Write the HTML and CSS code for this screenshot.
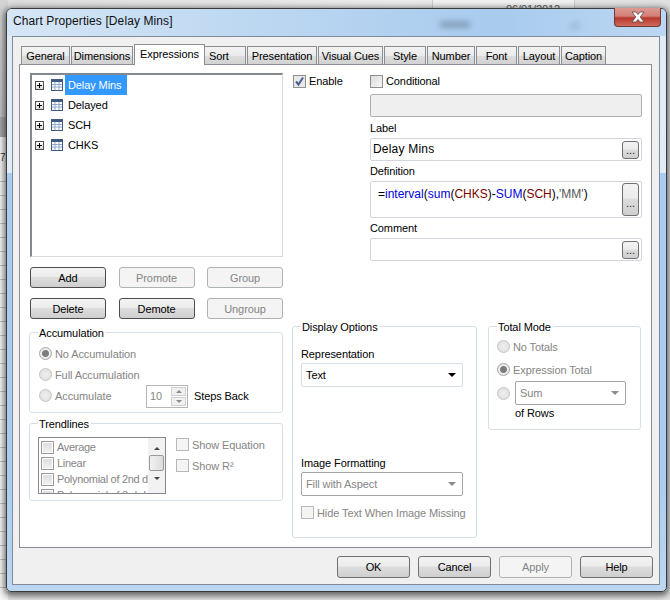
FILE: index.html
```html
<!DOCTYPE html>
<html lang="en">
<head>
<meta charset="utf-8">
<title>Chart Properties</title>
<link rel="stylesheet" href="styles.css">
</head>
<body>
<div class="desk-top"><div class="desk-date">06/01/2012</div></div>
<div class="desk-left"><span class="desk-num">72</span></div>
<div class="window">
  <div class="blur blur-a"></div>
  <div class="blur blur-b"></div>
  <div class="titlebar">Chart Properties [Delay Mins]</div>
  <div class="close"><svg width="14" height="12" viewBox="0 0 14 12"><path d="M1 1h4l2 2.6L9 1h4L9.2 6 13 11H9L7 8.4 5 11H1l3.800-5z" fill="#fff" stroke="#5b4a4a" stroke-width="0.8"/></svg></div>
  <div class="client">
    <div class="tabs">
      <div class="tab">General</div>
      <div class="tab">Dimensions</div>
      <div class="tab active">Expressions</div>
      <div class="tab tab-left">Sort</div>
      <div class="tab">Presentation</div>
      <div class="tab">Visual Cues</div>
      <div class="tab">Style</div>
      <div class="tab">Number</div>
      <div class="tab">Font</div>
      <div class="tab">Layout</div>
      <div class="tab">Caption</div>
    </div>
    <div class="page">
      <div class="col-left">
        <div class="tree">
          <div class="tree-row"><span class="plus"></span><svg class="grid-ico" width="12" height="12" viewBox="0 0 12 12"><rect x=".5" y=".5" width="11" height="11" fill="#fff" stroke="#3d5a80"/><rect x="1" y="1" width="10" height="2" fill="#3d5a80"/><path d="M4 3v8M8 3v8M1 5.500h10M1 8h10" stroke="#8fa8c8"/></svg><span class="tree-text selected">Delay Mins</span></div>
          <div class="tree-row"><span class="plus"></span><svg class="grid-ico" width="12" height="12" viewBox="0 0 12 12"><rect x=".5" y=".5" width="11" height="11" fill="#fff" stroke="#3d5a80"/><rect x="1" y="1" width="10" height="2" fill="#3d5a80"/><path d="M4 3v8M8 3v8M1 5.500h10M1 8h10" stroke="#8fa8c8"/></svg><span class="tree-text">Delayed</span></div>
          <div class="tree-row"><span class="plus"></span><svg class="grid-ico" width="12" height="12" viewBox="0 0 12 12"><rect x=".5" y=".5" width="11" height="11" fill="#fff" stroke="#3d5a80"/><rect x="1" y="1" width="10" height="2" fill="#3d5a80"/><path d="M4 3v8M8 3v8M1 5.500h10M1 8h10" stroke="#8fa8c8"/></svg><span class="tree-text">SCH</span></div>
          <div class="tree-row"><span class="plus"></span><svg class="grid-ico" width="12" height="12" viewBox="0 0 12 12"><rect x=".5" y=".5" width="11" height="11" fill="#fff" stroke="#3d5a80"/><rect x="1" y="1" width="10" height="2" fill="#3d5a80"/><path d="M4 3v8M8 3v8M1 5.500h10M1 8h10" stroke="#8fa8c8"/></svg><span class="tree-text">CHKS</span></div>
        </div>
        <div class="btn-grid">
          <div class="btn strong">Add</div>
          <div class="btn off">Promote</div>
          <div class="btn off">Group</div>
          <div class="btn strong">Delete</div>
          <div class="btn strong">Demote</div>
          <div class="btn off">Ungroup</div>
        </div>
        <div class="group acc">
          <div class="legend">Accumulation</div>
          <div class="radio-row"><span class="radio on"></span><span class="dim">No Accumulation</span></div>
          <div class="radio-row"><span class="radio"></span><span class="dim">Full Accumulation</span></div>
          <div class="radio-row"><span class="radio"></span><span class="dim acc-word">Accumulate</span>
            <div class="spin"><span class="spin-val">10</span><span class="spin-btns"><span class="spin-btn"><i class="up"></i></span><span class="spin-btn"><i class="down"></i></span></span></div>
            <span class="steps">Steps Back</span>
          </div>
        </div>
        <div class="group trend">
          <div class="legend">Trendlines</div>
          <div class="trend-list">
            <div class="trend-items">
              <div class="trend-item"><span class="mini"></span>Average</div>
              <div class="trend-item"><span class="mini"></span>Linear</div>
              <div class="trend-item"><span class="mini"></span>Polynomial of 2nd d</div>
              <div class="trend-item"><span class="mini"></span>Polynomial of 3rd d</div>
            </div>
            <div class="scroll"><i class="up dark"></i><span class="thumb"></span><i class="down dark"></i></div>
          </div>
          <div class="trend-checks">
            <div class="check-row"><span class="box"></span><span class="dim">Show Equation</span></div>
            <div class="check-row"><span class="box"></span><span class="dim">Show R²</span></div>
          </div>
        </div>
      </div>
      <div class="col-right">
        <div class="top">
          <div class="enable"><div class="check-row"><span class="box checked"><svg width="11" height="11" viewBox="0 0 11 11"><path d="M2 5.500l2.500 3L9 1.500" fill="none" stroke="#4a5f96" stroke-width="2"/></svg></span>Enable</div></div>
          <div class="fields">
            <div class="check-row cond"><span class="box plain"></span>Conditional</div>
            <div class="field disabled"></div>
            <div class="cap">Label</div>
            <div class="field"><span class="val">Delay Mins</span><span class="dots">...</span></div>
            <div class="cap cap-t">Definition</div>
            <div class="field tall"><span class="val code">=<b class="fn">interval</b>(<b class="fn">sum</b>(<b class="fd">CHKS</b>)-<b class="fn">SUM</b>(<b class="fd">SCH</b>),<b class="st">'MM'</b>)</span><span class="dots dots-tall">...</span></div>
            <div class="cap cap-t">Comment</div>
            <div class="field"><span class="val"></span><span class="dots">...</span></div>
          </div>
        </div>
        <div class="bottom">
          <div class="group display">
            <div class="legend">Display Options</div>
            <div class="sub">Representation</div>
            <div class="select light"><span>Text</span><i class="down black"></i></div>
            <div class="sub sub-img">Image Formatting</div>
            <div class="select grayb"><span class="dim">Fill with Aspect</span><i class="down"></i></div>
            <div class="check-row hide"><span class="box"></span><span class="dim">Hide Text When Image Missing</span></div>
          </div>
          <div class="group total">
            <div class="legend">Total Mode</div>
            <div class="radio-row t1"><span class="radio"></span><span class="dim">No Totals</span></div>
            <div class="radio-row t2"><span class="radio on"></span><span class="dim">Expression Total</span></div>
            <div class="radio-row t3"><span class="radio"></span><div class="select grayb small"><span class="dim">Sum</span><i class="down"></i></div></div>
            <div class="rows">of Rows</div>
          </div>
        </div>
      </div>
    </div>
    <div class="actions">
      <div class="btn wide">OK</div>
      <div class="btn wide">Cancel</div>
      <div class="btn wide off">Apply</div>
      <div class="btn wide">Help</div>
    </div>
  </div>
</div>
</body>
</html>
```
FILE: styles.css
```css
* { box-sizing: border-box; }
html, body { margin: 0; height: 100%; }
body {
  width: 670px; height: 600px; overflow: hidden; position: relative;
  background: #e6e6e6;
  font: 11px/14px "Liberation Sans", sans-serif; letter-spacing: -.1px; color: #000;
}
i { display: block; font-style: normal; }
b { font-weight: normal; }

.desk-top {
  position: absolute; left: 0; top: 0; width: 670px; height: 10px;
  background: linear-gradient(90deg, #dedede, #ececec 60%, #e0e0e0);
}
.desk-date {
  position: absolute; left: 432px; top: 0; width: 143px; height: 10px;
  background: #f1f1f1; border-left: 1px solid #ccc; border-right: 1px solid #ccc;
  color: #555; padding: 3px 0 0 73px; font-size: 11px; line-height: 12px; overflow: hidden;
}
.desk-left {
  position: absolute; left: 0; top: 0; width: 8px; height: 600px;
  background:
    linear-gradient(#d4d4d4, #c2c2c2 117px, #a8a8a8 117px, #a8a8a8 137px, #f7f7f7 137px, #f7f7f7 170px, transparent 170px),
    repeating-linear-gradient(transparent 0 13px, #c4c4c4 13px 14px),
    #f7f7f7;
}
.desk-num { position: absolute; left: 0; top: 152px; font-size: 10px; line-height: 12px; color: #333; }

.window {
  position: absolute; left: 6px; top: 8px; width: 661px; height: 584px;
  border: 1px solid #3a3a3a; border-radius: 6px 6px 5px 5px;
  padding: 27px 6px 6px 5px;
  background: linear-gradient(#dfeaf6, #e3edf7 164px, #a9cdf0 164px, #a9cdf0 470px, #bcd7f1 100%);
  box-shadow: 0 2px 6px 2px rgba(30, 30, 30, .65);
}
.window::before {
  content: ""; position: absolute; left: 0; top: 0; right: 0; height: 27px;
  border-radius: 5px 5px 0 0;
  background: linear-gradient(90deg, #d6e6f6, #c1daf2 30%, #a8cbee 75%, #bcd7f2);
}
.titlebar {
  position: absolute; left: 6px; top: 4px; font: 12px/16px "Liberation Sans", sans-serif;
  letter-spacing: .1px; color: #101010;
}
.blur { position: absolute; background: #4a5a6c; filter: blur(3px); opacity: .55; }
.blur-a { left: 433px; top: 13px; width: 30px; height: 5px; }
.blur-b { left: 564px; top: 14px; width: 8px; height: 6px; opacity: .25; }
.close {
  position: absolute; left: 607px; top: -1px; width: 47px; height: 19px;
  border: 1px solid #6e3a38; border-top: 0; border-radius: 0 0 4px 4px;
  background: linear-gradient(#dd9a92, #d17f76 45%, #b8382c 55%, #cf6a5c);
  display: flex; align-items: center; justify-content: center;
}
.client {
  position: relative; height: 100%;
  border: 1px solid #7f8b98; background: #f0f0f0;
  padding: 7px 7px 0 6px;
  display: flex; flex-direction: column;
}
.tabs {
  display: grid; height: 20px; margin-left: 2px; align-items: end;
  grid-template-columns: 50px 63px 71px 42px 71px 66px 43px 49px 42px 43px 46px;
  position: relative; z-index: 1;
}
.tab {
  height: 18px; margin-right: 1px; text-align: center; line-height: 19px;
  border: 1px solid #8a8d92; border-bottom: 0;
  background: linear-gradient(#f3f3f3, #ebebeb 50%, #dcdcdc 55%, #d2d2d2);
}
.tab.active {
  height: 21px; margin: 0 0 -1px; background: #fff; line-height: 19px;
}
.tab-left { text-align: left; padding-left: 4px; border-left: 0; }

.page {
  height: 484px; background: #fff; border: 1px solid #898c95;
  padding: 8px 0 0 9px; display: flex;
}
.col-left { width: 254px; display: flex; flex-direction: column; }
.col-right { width: 350px; margin-left: 9px; display: flex; flex-direction: column; }

.tree {
  margin-left: 1px; height: 184px; border: 1px solid;
  border-color: #828790 #d9d9d9 #d9d9d9 #828790; border-width: 2px 1px 1px 2px;
}
.tree-row { height: 20px; display: flex; align-items: center; }
.plus {
  width: 9px; height: 9px; margin-left: 3px; border: 1px solid #4e4e4e; background:
    linear-gradient(#000, #000) center / 5px 1px no-repeat,
    linear-gradient(#000, #000) center / 1px 5px no-repeat,
    linear-gradient(#fff, #d8d8d8);
}
.grid-ico { margin-left: 7px; }
.tree-text { margin-left: 2px; padding: 0 3px; height: 20px; line-height: 20px; white-space: nowrap; }
.selected { background: #3399ff; color: #fff; width: 62px; }

.btn {
  height: 21px; display: flex; align-items: center; justify-content: center;
  border: 1px solid #707070; border-radius: 3px;
  background: linear-gradient(#f3f3f3, #ececec 45%, #dddddd 50%, #cfcfcf);
}
.btn.strong { border-color: #4c4c4c; }
.btn.off { border-color: #adb2b5; background: #f4f4f4; color: #858585; }
.btn-grid {
  margin: 10px 0 0 1px; display: grid; row-gap: 10px;
  grid-template-columns: 76px 76px 76px; justify-content: space-between;
}
.group {
  position: relative; border: 1px solid #d5dfe5; border-radius: 3px; background: #fff;
}
.legend {
  position: absolute; left: 8px; top: -7px; padding: 0 2px 0 1px; background: #fff; line-height: 14px;
}
.dim { color: #858585; }
.acc { margin-top: 13px; height: 81px; padding: 10px 0 0 9px; }
.radio-row { height: 21px; display: flex; align-items: center; }
.radio {
  width: 13px; height: 13px; border-radius: 50%; flex: none; margin-right: 3px;
  border: 1px solid #c4c4c4;
  background: radial-gradient(circle, #f0f0f0, #dcdcdc);
}
.radio.on {
  background: radial-gradient(circle, #7d7d7d 0 3px, #f0f0f0 4px, #dcdcdc);
  border-color: #a6a6a6;
}
.acc-word { width: 91px; flex: none; }
.spin {
  width: 42px; height: 23px; display: flex; border: 1px solid #b5b5b5; flex: none; margin-top: 2px;
}
.spin-val { width: 24px; padding-left: 3px; line-height: 21px; color: #858585; }
.spin-btns { flex: 1; display: flex; flex-direction: column; gap: 1px; padding: 1px 1px 1px 0; }
.spin-btn {
  flex: 1; border: 1px solid #d0d0d0; background: #f0f0f0;
  display: flex; align-items: center; justify-content: center;
}
.up { width: 0; height: 0; border: 3px solid transparent; border-top: 0; border-bottom: 3px solid #8a8a8a; }
.down { width: 0; height: 0; border: 4px solid transparent; border-bottom: 0; border-top: 4px solid #8a8a8a; }
.spin-btn .down { border-width: 3px 3px 0; }
.steps { margin-left: 6px; }

.trend { margin-top: 10px; height: 78px; padding: 13px 0 0 8px; display: flex; }
.trend-list {
  width: 128px; height: 57px; border: 1px solid #828790; display: flex; overflow: hidden; flex: none;
}
.trend-items {
  flex: 1; min-width: 0; padding: 1px 0 0 2px; overflow: hidden; white-space: nowrap;
  color: #858585; letter-spacing: -.3px;
}
.trend-item { height: 16px; display: flex; align-items: center; }
.mini {
  width: 13px; height: 13px; margin-right: 3px; flex: none; border: 1px solid #9a9a9a;
  background: linear-gradient(#dcdcdc, #f2f2f2); box-shadow: inset 0 0 0 1px #fff;
}
.scroll {
  width: 17px; flex: none; background: #f2f2f2; display: flex; flex-direction: column; align-items: center;
  padding-top: 9px;
}
.thumb {
  width: 15px; height: 16px; margin: 5px 0 6px; border: 1px solid #9a9a9a; border-radius: 2px;
  background: linear-gradient(90deg, #f2f2f2, #dcdcdc);
}
.up.dark { border-bottom-color: #444; }
.down.dark { border-top-color: #444; border-width: 3px 3px 0; }
.trend-checks { margin: -3px 0 0 10px; }
.check-row { height: 21px; display: flex; align-items: center; white-space: nowrap; }
.box {
  width: 13px; height: 13px; margin-right: 3px; flex: none; border: 1px solid #b8b8b8; background: #f4f4f4;
  display: flex; align-items: center; justify-content: center;
}
.box.checked { border-color: #8e8f8f; background: #e8e8e8; }
.box.plain { border-color: #8e8f8f; background: linear-gradient(135deg, #dcdcdc, #f6f6f6); }

.top { height: 253px; display: flex; }
.enable { width: 78px; }
.enable .check-row { height: 18px; margin-top: -1px; }
.enable .box { margin-left: 1px; }
.fields { width: 272px; display: flex; flex-direction: column; }
.cond { height: 18px; margin-top: -1px; flex: none; }
.field {
  height: 23px; flex: none; display: flex; justify-content: space-between; align-items: center;
  border: 1px solid #d1d6dc; border-radius: 2px; background: #fff; padding-right: 2px;
}
.field.disabled { margin-top: 4px; background: #efefef; border-color: #b0b0b0; }
.field.tall { height: 37px; align-items: stretch; padding-top: 1px; padding-bottom: 1px; }
.cap { height: 21px; flex: none; display: flex; align-items: flex-end; padding-bottom: 3px; }
.cap-t { height: 20px; }
.val { padding: 0 0 2px 2px; font-size: 12px; letter-spacing: .2px; }
.code { padding: 4px 0 0 7px; font: 12px/14px "Liberation Sans", sans-serif; letter-spacing: 0; }
.fn { color: #0000e0; }
.fd { color: #7a0000; }
.st { color: #555; }
.dots {
  width: 17px; height: 18px; border: 1px solid #6f6f6f; border-radius: 3px;
  background: linear-gradient(#f3f3f3, #ececec 45%, #dcdcdc 50%, #cfcfcf);
  font-size: 11px; line-height: 16px; text-align: center; color: #222;
}
.dots-tall { height: 33px; line-height: 26px; padding-top: 6px; }

.bottom { display: flex; gap: 11px; }
.display { width: 185px; height: 212px; padding: 20px 0 0 8px; }
.total { width: 153px; height: 104px; padding: 8px 0 0 8px; }
.sub { height: 14px; }
.sub-img { margin-top: 69px; }
.select {
  width: 162px; height: 24px; margin-top: 2px; padding: 0 6px 0 4px;
  display: flex; align-items: center; justify-content: space-between; border-radius: 2px;
}
.light { border: 1px solid #d5dfe5; }
.grayb { border: 1px solid #a5a5a5; }
.down.black { border-top-color: #000; }
.hide { margin-top: 6px; height: 21px; }
.t1, .t2 { height: 23px; }
.t3 { height: 24px; }
.t3 .radio { margin-right: 5px; }
.small { width: 111px; margin-top: 0; }
.rows { margin: 1px 0 0 18px; }

.actions {
  display: grid; grid-template-columns: repeat(4, 73px); justify-content: end; gap: 8px;
  padding-top: 8px; margin-right: -1px;
}
.btn.wide { height: 22px; }
```
